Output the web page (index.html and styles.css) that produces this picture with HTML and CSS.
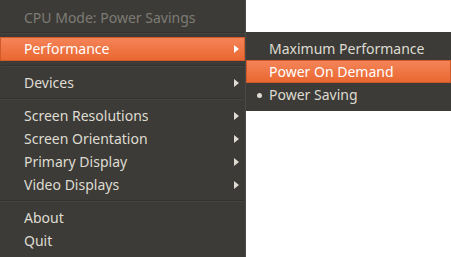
FILE: index.html
```html
<!DOCTYPE html>
<html lang="en">
<head>
  <meta charset="UTF-8">
  <meta name="viewport" content="width=device-width, initial-scale=1.0">
  <title>CPU Mode</title>
<link rel="stylesheet" href="styles.css">
</head>
<body>
  <div class="screen">
    <!-- Menu principal -->
    <div class="menu main-menu">
      <div class="item disabled">CPU Mode: Power Savings</div>
      <div class="sep short"></div>
      <div class="item active has-sub">Performance</div>
      <div class="sep"></div>
      <div class="item has-sub">Devices</div>
      <div class="sep"></div>
      <div class="item has-sub">Screen Resolutions</div>
      <div class="item has-sub">Screen Orientation</div>
      <div class="item has-sub">Primary Display</div>
      <div class="item has-sub">Video Displays</div>
      <div class="sep"></div>
      <div class="item">About</div>
      <div class="item">Quit</div>
    </div>

    <!-- Submenu Performance -->
    <div class="menu sub-menu">
      <div class="item">Maximum Performance</div>
      <div class="item active">Power On Demand</div>
      <div class="item checked">Power Saving</div>
    </div>
  </div>
</body>
</html>
```

FILE: styles.css
```css
body {
  margin: 0;
  background-color: #ffffff;
  font-family: "Noto Sans", "DejaVu Sans", sans-serif;
  font-size: 14px;
}

.screen {
  display: flex;
  align-items: flex-start;
  width: 451px;
  height: 257px;
  overflow: hidden;
}

.menu {
  background-color: #3c3b37;
  box-sizing: border-box;
}

.main-menu {
  width: 246px;
  height: 262px;
  padding-top: 6px;
  border-right: 1px solid #4b4a46;
}

.sub-menu {
  flex: 1;
  margin-top: 32px;
  padding: 5px 0 5px;
}

.item {
  position: relative;
  height: 23px;
  line-height: 23px;
  padding-left: 24px;
  color: #dfdbd2;
  white-space: nowrap;
}

.sub-menu .item {
  padding-left: 23px;
}

.item.disabled {
  color: #7e7b74;
}

.item.active {
  color: #ffffff;
  background: linear-gradient(to bottom, #f5855a, #e9662f);
  box-shadow: inset 0 0 0 1px #d0592a;
}

.main-menu .item.active {
  height: 24px;
  line-height: 24px;
}

/* seta do submenu */
.item.has-sub::after {
  content: "";
  position: absolute;
  right: 6px;
  top: 50%;
  margin-top: -4px;
  border-left: 5px solid #dfdbd2;
  border-top: 4px solid transparent;
  border-bottom: 4px solid transparent;
}

.item.active.has-sub::after {
  border-left-color: #ffffff;
}

/* marcador de opção selecionada */
.item.checked::before {
  content: "";
  position: absolute;
  left: 11px;
  top: 50%;
  width: 5px;
  height: 5px;
  margin-top: -2px;
  border-radius: 50%;
  background-color: #dfdbd2;
}

.sep {
  height: 10px;
  display: flex;
  align-items: center;
}

.sep.short {
  height: 8px;
}

.sep::before {
  content: "";
  flex: 1;
  margin: 0 1px;
  height: 1px;
  background-color: #33322f;
  border-bottom: 1px solid #45443f;
}
```
